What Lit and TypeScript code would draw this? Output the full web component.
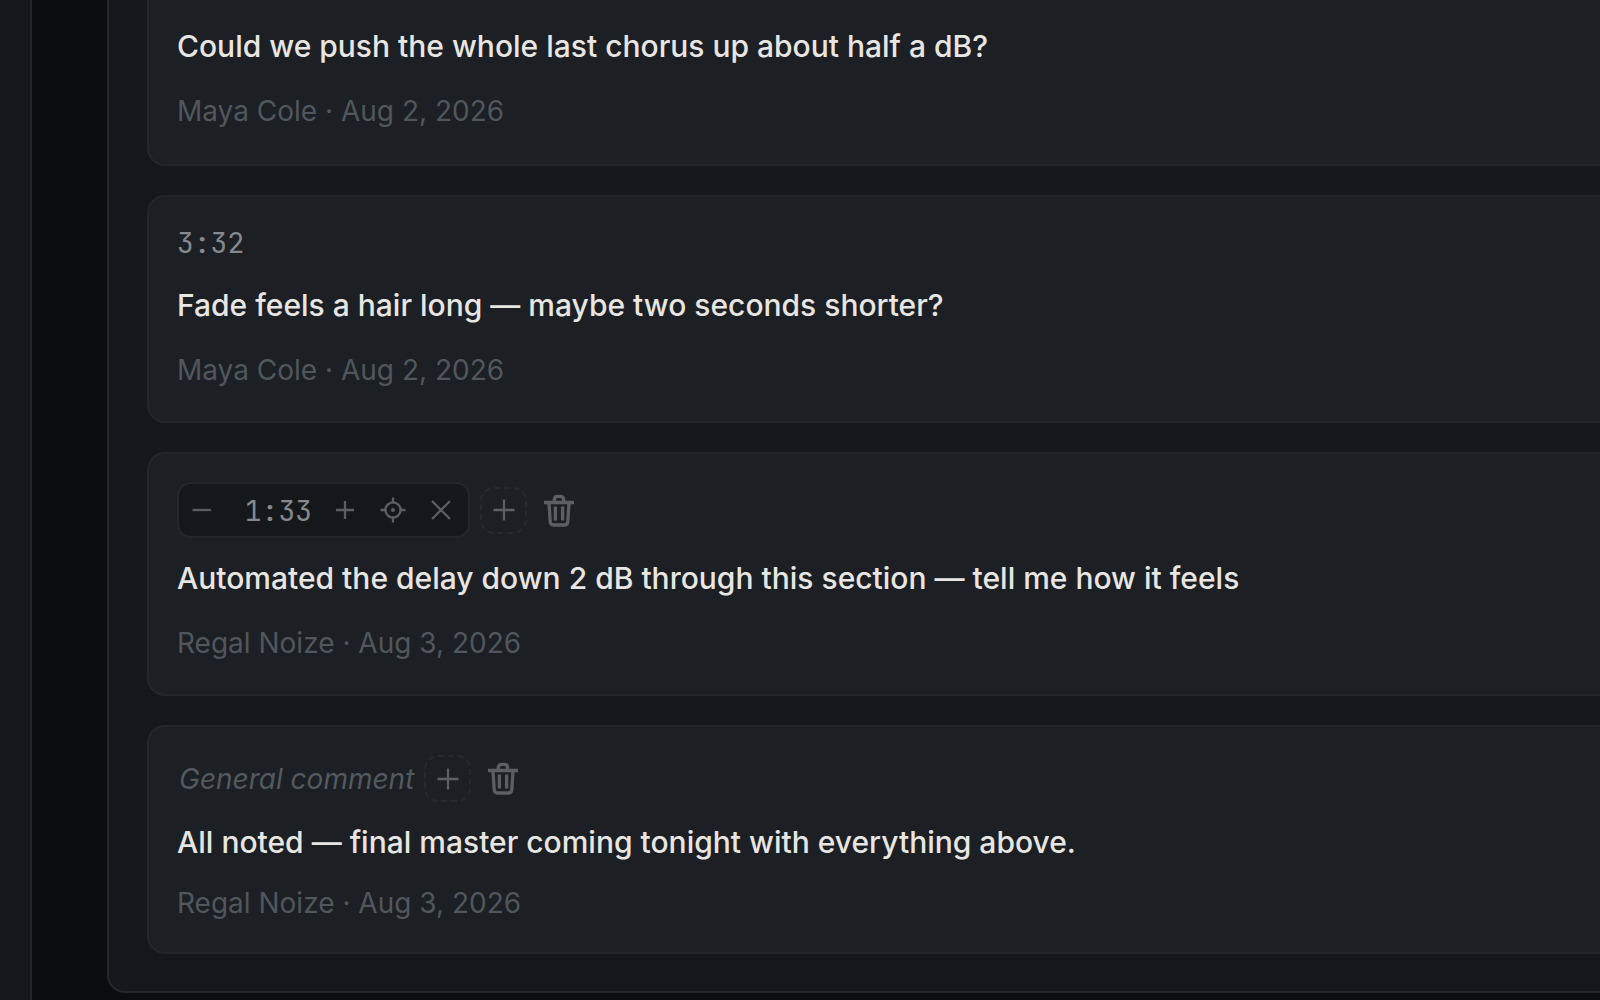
import { LitElement, html, css, svg, nothing } from "lit";
import { customElement, property } from "lit/decorators.js";

interface Comment {
  kind: "clipped" | "timed" | "editable" | "general";
  time?: string;
  text: string;
  author: string;
  date: string;
}

const comments: Comment[] = [
  { kind: "clipped", text: "Could we push the whole last chorus up about half a dB?", author: "Maya Cole", date: "Aug 2, 2026" },
  { kind: "timed", time: "3:32", text: "Fade feels a hair long — maybe two seconds shorter?", author: "Maya Cole", date: "Aug 2, 2026" },
  { kind: "editable", time: "1:33", text: "Automated the delay down 2 dB through this section — tell me how it feels", author: "Regal Noize", date: "Aug 3, 2026" },
  { kind: "general", text: "All noted — final master coming tonight with everything above.", author: "Regal Noize", date: "Aug 3, 2026" },
];

const icons = {
  minus: svg`<path d="M3.5 13H22" />`,
  plus: svg`<path d="M4 13H22M13 4V22" />`,
  plusLarge: svg`<path d="M2.5 13H23.5M13 2.5V23.5" />`,
  target: svg`<circle cx="13" cy="13" r="7.6" /><path d="M13 .5V6.5M13 19.5V25.5M.5 13H6.5M19.5 13H25.5" /><circle class="dot" cx="13" cy="13" r="2" />`,
  close: svg`<path d="M4 4L22 22M22 4L4 22" />`,
};

@customElement("comment-card")
export class CommentCard extends LitElement {
  @property({ attribute: false }) comment!: Comment;

  static styles = css`
    :host { display: block; }
    .card {
      box-sizing: border-box;
      padding: 28px;
      border: 2px solid #23272a;
      border-radius: 18px;
      background: #1c1f24;
    }
    .clipped { padding-top: 22px; padding-bottom: 30px; border-top: 0; border-top-left-radius: 0; border-top-right-radius: 0; }
    .head { display: flex; align-items: center; gap: 10px; margin-bottom: 16px; }
    .timed .head { margin-bottom: 20px; }
    .time, .value {
      font: 28px/36px "JetBrains Mono", "DejaVu Sans Mono", monospace;
      color: #85898d;
    }
    .label { padding-left: 2px; font-size: 28px; line-height: 42px; font-style: italic; color: #535a5f; }
    .text { margin: 0; font-size: 30px; font-weight: 500; line-height: 48px; color: #e8e6e3; }
    .meta { margin: 20px 0 0; padding-bottom: 2px; font-size: 28px; line-height: 42px; color: #50575c; }
    .general .meta { margin-top: 16px; padding-bottom: 0; }
    .stepper {
      display: flex; align-items: center; gap: 2px;
      box-sizing: border-box; height: 56px; padding-right: 4px;
      border: 2px solid #23272a; border-radius: 14px; background: #14181a;
    }
    .value {
      box-sizing: border-box; width: 93px; height: 46px; margin: 0; padding: 0 8px 0 0;
      border: 0; background: none; text-align: right; outline: none;
    }
    button {
      display: flex; align-items: center; justify-content: center;
      box-sizing: border-box; width: 46px; height: 46px; margin: 0; padding: 0;
      border: 0; background: none; color: #5b5f63; cursor: pointer;
    }
    .add { width: 47px; height: 47px; border: 2px dashed #26292d; border-radius: 14px; }
    .delete { width: 44px; }
    svg { display: block; fill: none; stroke: currentColor; stroke-width: 2.3; }
    .dot { fill: currentColor; stroke: none; }
    .trash { stroke-width: 3.3; stroke-linejoin: round; }
  `;

  private button(name: string, icon: unknown, cls = "") {
    return html`<button type="button" class=${cls} aria-label=${name}>
      <svg width="26" height="26" viewBox="0 0 26 26">${icon}</svg>
    </button>`;
  }

  private actions() {
    return html`${this.button("Add marker", icons.plusLarge, "add")}
      <button type="button" class="delete" aria-label="Delete comment">
        <svg class="trash" width="30" height="33" viewBox="0 0 30 33">
          <path d="M0 8.5H30M10.3 8V6Q10.3 2.3 13.8 2.3H16.2Q19.7 2.3 19.7 6V8M5 9L6.200 27.500Q6.500 31 9.500 31H20.500Q23.500 31 23.800 27.500L25 9M11.400 12.500V26.500M18.600 12.500V26.500" />
        </svg>
      </button>`;
  }

  private head() {
    const c = this.comment;
    if (c.kind === "timed") return html`<div class="head"><time class="time">${c.time}</time></div>`;
    if (c.kind === "editable")
      return html`<div class="head">
        <div class="stepper">
          ${this.button("Earlier", icons.minus)}
          <input class="value" type="text" aria-label="Timestamp" .value=${c.time ?? ""} />
          ${this.button("Later", icons.plus)}
          ${this.button("Use playhead position", icons.target)}
          ${this.button("Remove timestamp", icons.close)}
        </div>
        ${this.actions()}
      </div>`;
    if (c.kind === "general") return html`<div class="head"><span class="label">General comment</span>${this.actions()}</div>`;
    return nothing;
  }

  render() {
    const c = this.comment;
    return html`<article class="card ${c.kind}">
      ${this.head()}
      <p class="text">${c.text}</p>
      <p class="meta">${c.author} · ${c.date}</p>
    </article>`;
  }
}

@customElement("app-root")
export class AppRoot extends LitElement {
  static styles = css`
    :host {
      display: flex; min-height: 100vh; overflow: hidden;
      background: #0c0d0e; font-family: Inter, sans-serif;
    }
    .sidebar { box-sizing: border-box; flex: none; width: 32px; border-right: 2px solid #23272a; background: #14181a; }
    main { flex: 1; min-width: 0; padding-left: 75px; }
    .panel {
      display: flex; flex-direction: column; gap: 29px;
      padding: 0 0 37px 38px;
      border: solid #23272a; border-width: 0 0 2px 2px;
      border-bottom-left-radius: 18px; background: #14181a;
    }
    .panel comment-card { margin-right: -20px; }
  `;

  render() {
    return html`<aside class="sidebar"></aside>
      <main>
        <section class="panel" aria-label="Comments">
          ${comments.map((c) => html`<comment-card .comment=${c}></comment-card>`)}
        </section>
      </main>`;
  }
}
